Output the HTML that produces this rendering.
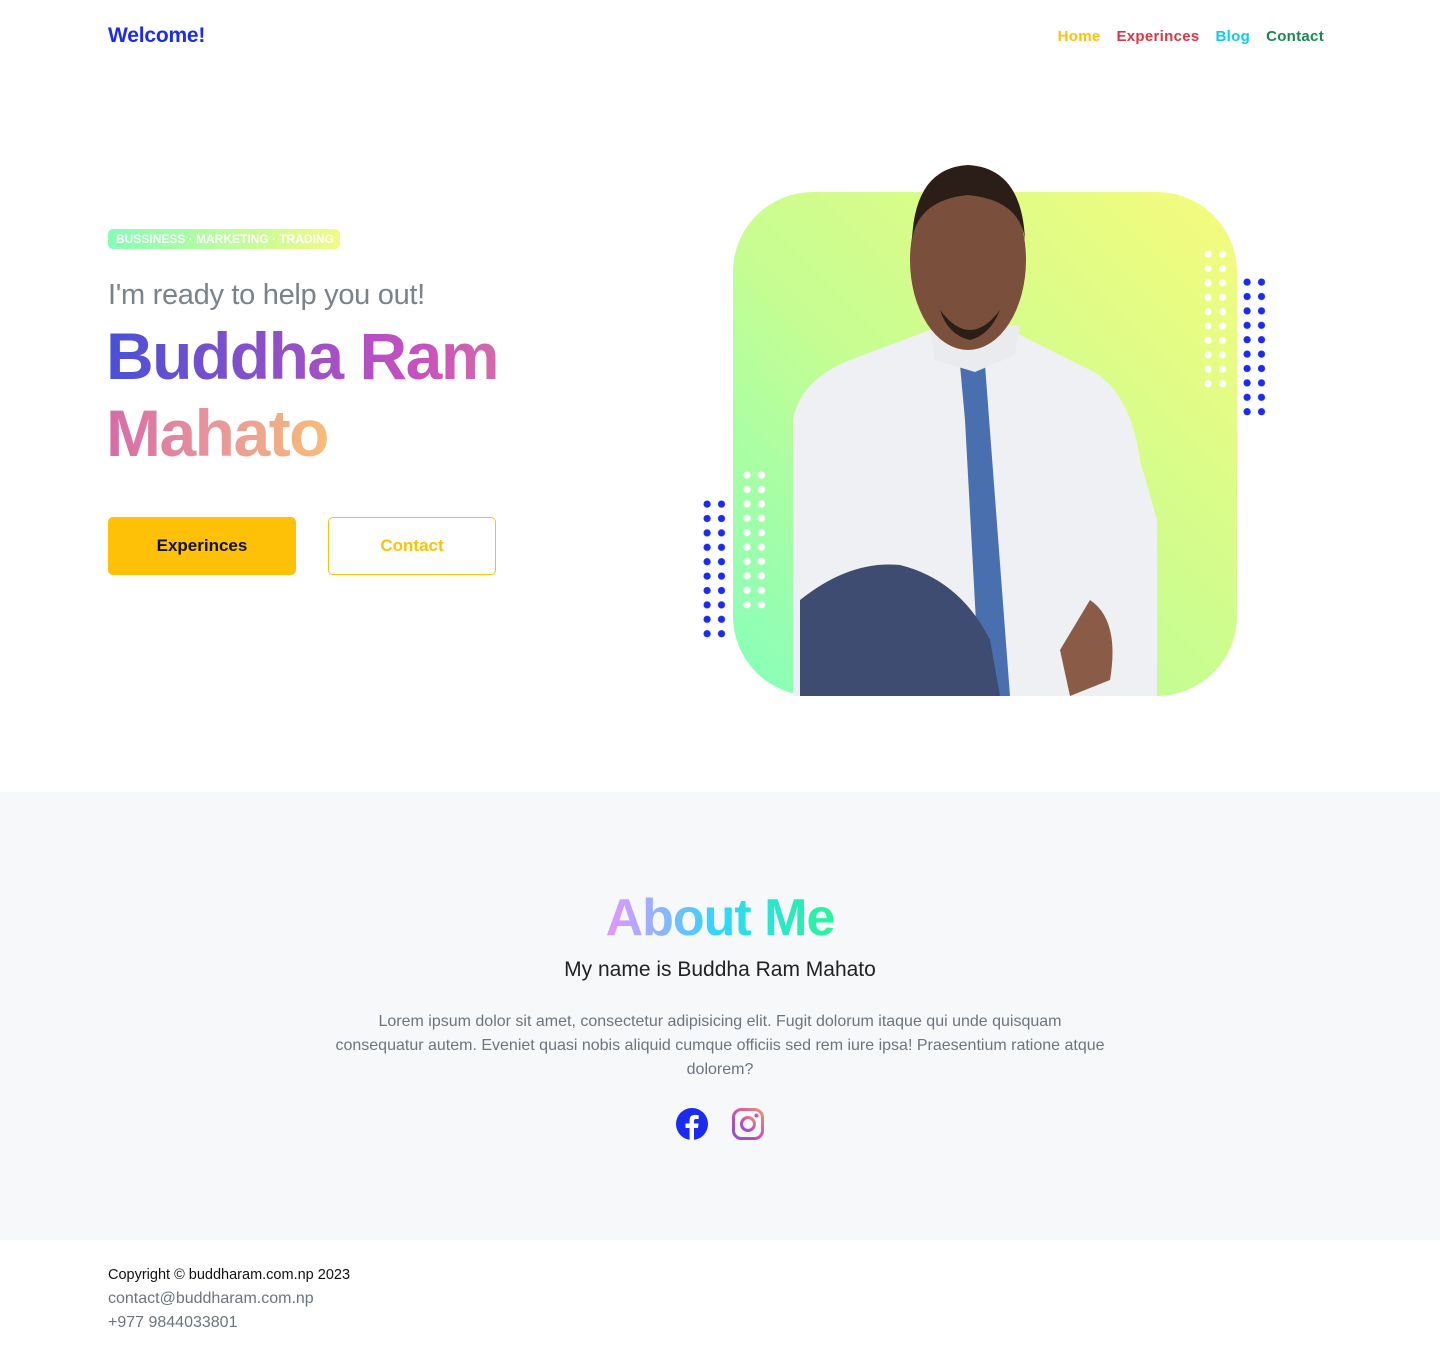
<!DOCTYPE html>
<html><head><meta charset="utf-8"><style>
*{margin:0;padding:0;box-sizing:border-box}
body{width:1440px;height:1357px;font-family:"Liberation Sans",sans-serif;background:#fff;position:relative;overflow:hidden}
.nav{position:absolute;top:24px;left:108px;right:116px;height:26px}
.logo{position:absolute;left:0;top:0;font-size:21px;font-weight:bold;color:#1b2bf0;letter-spacing:-0.2px}
.links{position:absolute;right:0;top:4px;font-size:15px;font-weight:bold;letter-spacing:0.3px}
.links span{margin-left:16px}
.tag{position:absolute;left:108px;top:229px;width:232px;height:20px;border-radius:5px;background:linear-gradient(90deg,#86fcb8,#f1fb84);color:#fff;font-size:12px;font-weight:bold;line-height:20px;padding-left:8px;letter-spacing:0px;white-space:nowrap}
.sub{position:absolute;left:108px;top:279px;font-size:29px;color:#7a828a;font-weight:300;letter-spacing:-0.3px}
.name{position:absolute;left:106px;top:318px;font-size:66px;font-weight:bold;line-height:77px;letter-spacing:-1.5px;width:420px}
.name span{display:inline-block;-webkit-background-clip:text;background-clip:text;color:transparent}
.l1{background:linear-gradient(90deg,#4a50d8,#8a50c8 40%,#c850bf 80%,#d46aa8)}
.l2{background:linear-gradient(90deg,#d66aa8,#e8979a 50%,#f7bd78)}
.btn1{position:absolute;left:108px;top:517px;width:188px;height:58px;background:#ffc107;border-radius:5px;font-size:17px;font-weight:bold;color:#111;text-align:center;line-height:58px}
.btn2{position:absolute;left:328px;top:517px;width:168px;height:58px;border:1px solid #ffc107;border-radius:5px;font-size:17px;font-weight:bold;color:#ffc107;text-align:center;line-height:56px}
.card{position:absolute;left:733px;top:192px;width:504px;height:504px;border-radius:80px;background:linear-gradient(45deg,#84ffbb 0%,#c6fd92 45%,#f6fb7c 100%);overflow:hidden}
.about{position:absolute;left:0;top:792px;width:1440px;height:448px;background:#f7f8fa;text-align:center}
.at{margin-top:96px;font-size:52px;font-weight:bold;letter-spacing:-1px;display:inline-block;background:linear-gradient(90deg,#e695ff,#2bd8fb 50%,#2af59a);-webkit-background-clip:text;background-clip:text;color:transparent;line-height:60px}
.my{margin-top:10px;font-size:21px;color:#222;font-weight:300}
.lorem{margin:28px auto 0;width:820px;font-size:16px;line-height:24px;color:#6c757d}
.icons{margin-top:26px}
.foot{position:absolute;left:108px;top:1263px;font-size:15px;line-height:24px}
</style></head><body>
<div class="nav"><div class="logo">Welcome!</div>
<div class="links"><span style="color:#ffc107">Home</span><span style="color:#dc3545">Experinces</span><span style="color:#0dcaf0">Blog</span><span style="color:#198754">Contact</span></div></div>
<div class="tag">BUSSINESS · MARKETING · TRADING</div>
<div class="sub">I'm ready to help you out!</div>
<div class="name"><span class="l1">Buddha Ram</span><br><span class="l2">Mahato</span></div>
<div class="btn1">Experinces</div>
<div class="btn2">Contact</div>
<div class="card"></div>
<svg style="position:absolute;left:0;top:0" width="1440" height="760">
<defs>
<pattern id="bl" width="14.4" height="14.4" patternUnits="userSpaceOnUse"><circle cx="3.6" cy="3.6" r="3.6" fill="#1b2bf0"/></pattern>
<pattern id="wh" width="14.4" height="14.4" patternUnits="userSpaceOnUse"><circle cx="3.6" cy="3.6" r="3.6" fill="#fff"/></pattern>
</defs>
<g transform="translate(703.5,500.5)"><rect width="22" height="144" fill="url(#bl)"/></g>
<g transform="translate(743.5,471.5)"><rect width="22" height="144" fill="url(#wh)"/></g>
<g transform="translate(1204.5,250.5)"><rect width="22" height="144" fill="url(#wh)"/></g>
<g transform="translate(1243.5,278.5)"><rect width="22" height="144" fill="url(#bl)"/></g>
<path d="M793 420 Q800 380 850 360 L930 330 L1010 330 L1090 370 Q1130 390 1140 460 L1157 520 L1157 696 L793 696 Z" fill="#eef0f4"/>
<path d="M960 365 L985 365 L1010 696 L980 696 L965 420 Z" fill="#4a6fae"/>
<path d="M800 600 Q850 560 900 565 Q960 580 990 640 L1000 696 L800 696 Z" fill="#3e4c72"/>
<path d="M930 330 L935 360 L975 372 L1015 355 L1020 325 Z" fill="#e9ebef"/>
<ellipse cx="968" cy="260" rx="58" ry="90" fill="#7a4f3c"/>
<path d="M912 240 Q915 168 968 165 Q1022 168 1025 240 Q1020 200 968 195 Q918 200 912 240Z" fill="#2b1d18"/>
<path d="M940 310 Q970 350 1000 310 Q990 335 970 340 Q948 335 940 310Z" fill="#2b1d18"/>
<path d="M1090 600 Q1120 620 1110 680 L1070 696 L1060 650 Z" fill="#8a5c48"/>
</svg>
<div class="about">
<div class="at">About Me</div>
<div class="my">My name is Buddha Ram Mahato</div>
<div class="lorem">Lorem ipsum dolor sit amet, consectetur adipisicing elit. Fugit dolorum itaque qui unde quisquam<br>consequatur autem. Eveniet quasi nobis aliquid cumque officiis sed rem iure ipsa! Praesentium ratione atque<br>dolorem?</div>
<div class="icons">
<svg width="32" height="32" viewBox="0 0 32 32" style="margin-right:20px"><circle cx="16" cy="16" r="16" fill="#1b2bf0"/><path d="M18 32 V20 H22 L22.6 15.5 H18 V12.8 Q18 11 20 11 H22.7 V7.2 Q20.5 6.9 19 6.9 Q13.6 7 13.6 12.3 V15.5 H9.5 V20 H13.6 V32 Z" fill="#fff"/></svg>
<svg width="32" height="32" viewBox="0 0 32 32"><defs><linearGradient id="ig" x1="0" y1="1" x2="1" y2="0"><stop offset="0" stop-color="#8a4fd8"/><stop offset="0.5" stop-color="#d04fb0"/><stop offset="1" stop-color="#f09070"/></linearGradient></defs><rect x="1.5" y="1.5" width="29" height="29" rx="8" fill="none" stroke="url(#ig)" stroke-width="3"/><circle cx="16" cy="16" r="6.5" fill="none" stroke="url(#ig)" stroke-width="3"/><circle cx="24.5" cy="7.5" r="2" fill="url(#ig)"/></svg>
</div>
</div>
<div class="foot"><div style="color:#111;font-size:14.5px">Copyright © buddharam.com.np 2023</div><div style="color:#6c757d;font-size:16px">contact@buddharam.com.np</div><div style="color:#6c757d;font-size:16px">+977 9844033801</div></div>
</body></html>
